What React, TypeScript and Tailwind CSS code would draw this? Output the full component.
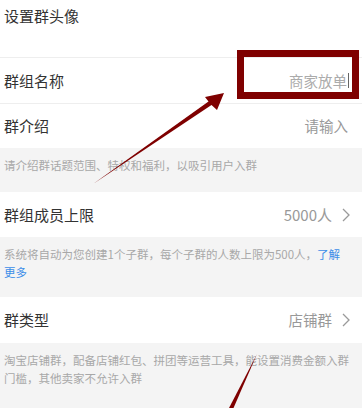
import React from "react";

const FONT = { fontFamily: '"Noto Sans CJK SC", "Noto Sans", sans-serif' };

function Chevron() {
  return (
    <svg width="8" height="14" viewBox="0 0 8 14" className="ml-[10px]">
      <polyline points="1,1 7,7 1,13" fill="none" stroke="#9a9a9a" strokeWidth="1.3" />
    </svg>
  );
}

function Row({ title, className, children }: { title: string; className: string; children?: React.ReactNode }) {
  return (
    <div className={`flex items-center justify-between bg-white pl-[4px] ${className}`}>
      <span className="text-[15px] leading-[22px] text-[#333]">{title}</span>
      <div className="flex items-center">{children}</div>
    </div>
  );
}

function Hint({ className, children }: { className: string; children: React.ReactNode }) {
  return (
    <div className={`bg-[#f4f4f4] pl-[4px] pt-[8px] text-[11.5px] leading-[18px] text-[#a8a8a8] ${className}`}>
      {children}
    </div>
  );
}

function Arrows() {
  return (
    <svg className="pointer-events-none absolute left-0 top-0" width="362" height="408" viewBox="0 0 362 408">
      <polygon points="93,184 208.5,101.5 205,97 224,93 217,110 211.5,105" fill="#7f0000" />
      <polygon points="257,354 233.5,408 229,408" fill="#7f0000" />
    </svg>
  );
}

export default function App() {
  return (
    <div className="relative h-[408px] w-[362px] overflow-hidden bg-[#f4f4f4]" style={FONT}>
      <div className="h-[58px] border-b border-[#eeeeee] bg-white pl-[4px] pt-[5px] text-[15px] leading-[22px] text-[#333]">
        设置群头像
      </div>
      <Row title="群组名称" className="h-[46px] border-b border-[#eeeeee] pr-[13px]">
        <span className="text-[14.5px] leading-[22px] text-[#ababab]">商家放单</span>
        <span className="ml-[1px] h-[15px] w-px bg-[#666]" />
      </Row>
      <Row title="群介绍" className="h-[44px] pr-[14px]">
        <span className="text-[14.5px] leading-[22px] text-[#999]">请输入</span>
      </Row>
      <Hint className="h-[44px] pr-[10px]">请介绍群话题范围、特权和福利，以吸引用户入群</Hint>
      <Row title="群组成员上限" className="h-[45px] pr-[12px]">
        <span className="text-[15px] leading-[22px] text-[#999]">5000人</span>
        <Chevron />
      </Row>
      <Hint className="h-[60px] pr-[17px]">
        系统将自动为您创建1个子群，每个子群的人数上限为500人，<span className="text-[#3d8ee8]">了解更多</span>
      </Hint>
      <Row title="群类型" className="h-[46px] pr-[12px]">
        <span className="text-[14.5px] leading-[22px] text-[#999]">店铺群</span>
        <Chevron />
      </Row>
      <Hint className="h-[65px] pr-[8px]">淘宝店铺群，配备店铺红包、拼团等运营工具，能设置消费金额入群门槛，其他卖家不允许入群</Hint>

      <div className="pointer-events-none absolute left-[237px] top-[50px] h-[49px] w-[122px] border-[7px] border-[#7f0000]" />
      <Arrows />
    </div>
  );
}
